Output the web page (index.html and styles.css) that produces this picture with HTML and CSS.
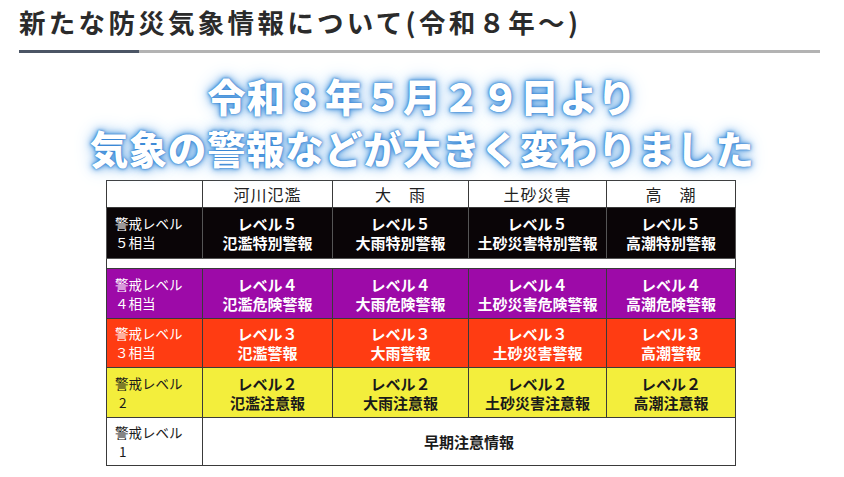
FILE: index.html
```html
<!DOCTYPE html>
<html lang="ja">
<head>
<meta charset="utf-8">
<link rel="stylesheet" href="styles.css">
</head>
<body>
<div class="page">
  <h1 class="title">新たな防災気象情報について(令和８年～)</h1>
  <div class="rule"><span class="rule-accent"></span></div>
  <div class="banner">
    <div class="banner-line">令和８年５月２９日より</div>
    <div class="banner-line">気象の警報などが大きく変わりました</div>
  </div>
  <table class="levels">
    <colgroup>
      <col class="c1"><col class="c2"><col class="c3"><col class="c4"><col class="c5">
    </colgroup>
    <tr class="head">
      <th></th><th>河川氾濫</th><th>大　雨</th><th>土砂災害</th><th>高　潮</th>
    </tr>
    <tr class="lv5">
      <td class="lab">警戒レベル<br><span class="num">５相当</span></td>
      <td>レベル５<br>氾濫特別警報</td>
      <td>レベル５<br>大雨特別警報</td>
      <td>レベル５<br>土砂災害特別警報</td>
      <td>レベル５<br>高潮特別警報</td>
    </tr>
    <tr class="gap"><td colspan="5"></td></tr>
    <tr class="lv4">
      <td class="lab">警戒レベル<br><span class="num">４相当</span></td>
      <td>レベル４<br>氾濫危険警報</td>
      <td>レベル４<br>大雨危険警報</td>
      <td>レベル４<br>土砂災害危険警報</td>
      <td>レベル４<br>高潮危険警報</td>
    </tr>
    <tr class="lv3">
      <td class="lab">警戒レベル<br><span class="num">３相当</span></td>
      <td>レベル３<br>氾濫警報</td>
      <td>レベル３<br>大雨警報</td>
      <td>レベル３<br>土砂災害警報</td>
      <td>レベル３<br>高潮警報</td>
    </tr>
    <tr class="lv2">
      <td class="lab">警戒レベル<br><span class="num num-half">2</span></td>
      <td>レベル２<br>氾濫注意報</td>
      <td>レベル２<br>大雨注意報</td>
      <td>レベル２<br>土砂災害注意報</td>
      <td>レベル２<br>高潮注意報</td>
    </tr>
    <tr class="lv1">
      <td class="lab">警戒レベル<br><span class="num num-half">1</span></td>
      <td colspan="4">早期注意情報</td>
    </tr>
  </table>
</div>
</body>
</html>
```

FILE: styles.css
```css
html, body {
  margin: 0;
  padding: 0;
  background: #ffffff;
}

body {
  font-family: "Noto Sans CJK JP", "Noto Sans", sans-serif;
  color: #2a2a2a;
}

.page {
  width: 844px;
  height: 477px;
  overflow: hidden;
}

.title {
  margin: 0;
  padding: 4px 0 0 19px;
  height: 45px;
  box-sizing: border-box;
  font-size: 26.5px;
  line-height: 36px;
  font-weight: 700;
  color: #2b2b2b;
  letter-spacing: 3.3px;
}

.rule {
  margin-left: 19px;
  width: 801px;
  height: 3px;
  margin-top: 5px;
  background: #b3b3b3;
  display: flex;
}

.rule-accent {
  width: 120px;
  height: 3px;
  background: #4b5565;
}

.banner {
  margin-top: 16px;
  text-align: center;
  color: #ffffff;
  font-size: 38.5px;
  font-weight: 900;
  line-height: 52px;
  letter-spacing: 0.6px;
  text-shadow:
    0 0 1px #2a78cc,
    0 0 3px #2f80d4,
    0 0 6px #4a95dc,
    0 0 11px #7fb6ea,
    0 0 20px #b5d6f4;
}

.levels {
  margin-top: 7px;
  margin-left: 106px;
  width: 629px;
  border-collapse: collapse;
  table-layout: fixed;
  border: 1px solid #555;
}

.c1 { width: 96px; }
.c2 { width: 130px; }
.c3 { width: 136px; }
.c4 { width: 138px; }
.c5 { width: 129px; }

.levels th,
.levels td {
  border: 1px solid #3a3a3a;
  padding: 0;
  text-align: center;
  vertical-align: middle;
  font-size: 15px;
  line-height: 19px;
}

.levels th {
  height: 26px;
  font-size: 16px;
  letter-spacing: 1px;
  font-weight: 400;
  color: #222;
  background: #fff;
}

.levels td {
  font-weight: 700;
}

.levels td.lab {
  text-align: left;
  padding-left: 8px;
  font-weight: 400;
  font-size: 13.5px;
  line-height: 19px;
}

.lab .num-half {
  padding-left: 4px;
}

.lv5 td { height: 50px; background: #0a0507; color: #fff; border-color: #555; }
.gap td { height: 9px; background: #fff; }
.lv4 td { height: 49px; background: #9d0aa8; color: #fff; }
.lv3 td { height: 48px; background: #ff3c12; color: #fff; }
.lv2 td { height: 49px; background: #f3ee3c; color: #1a1a1a; }
.lv1 td { height: 47px; background: #fff; color: #1a1a1a; }
```
